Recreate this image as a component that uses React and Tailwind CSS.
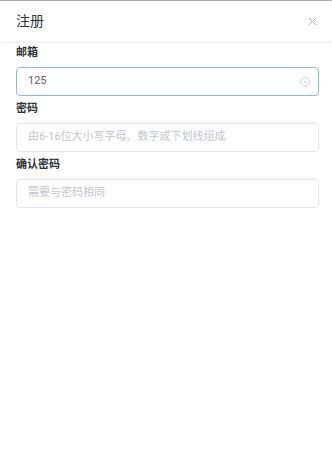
import React, { useState } from 'react';

function Field({ label, value, placeholder, focused, onClear }) {
  return (
    <div className="mb-[2px]">
      <div className="h-[22px] leading-[22px] text-[11px] font-bold text-[#303133]">{label}</div>
      <div
        className={
          focused
            ? 'mt-[3px] h-[29px] flex items-center rounded-[4px] border border-[#7fbdf7] bg-white pl-[11px] pr-[8px]'
            : 'mt-[3px] h-[29px] flex items-center rounded-[4px] border border-[#e4e7ed] bg-white pl-[11px] pr-[8px]'
        }
      >
        <input
          type="text"
          value={value}
          readOnly
          placeholder={placeholder}
          className="flex-1 min-w-0 bg-transparent text-[11px] text-[#606266] outline-none placeholder:text-[#c4c7cd]"
        />
        {value ? (
          <button onClick={onClear} className="flex h-[10px] w-[10px] items-center justify-center rounded-full border border-[#d0d3d9]">
            <svg width="4" height="4" viewBox="0 0 10 10">
              <path d="M2 2 L8 8 M8 2 L2 8" stroke="#d0d3d9" strokeWidth="2" strokeLinecap="round" />
            </svg>
          </button>
        ) : null}
      </div>
    </div>
  );
}

export default function App() {
  const [email, setEmail] = useState('125');

  return (
    <div
      className="min-h-[474px] w-full bg-white border-t border-[#b4b4b4]"
      style={{ fontFamily: 'Roboto, "Noto Sans CJK SC", sans-serif' }}
    >
      {/* Header */}
      <div className="relative z-10 h-10 flex items-center justify-between pl-4 pr-[15px] bg-white shadow-[0_2px_4px_rgba(0,0,0,0.07)]">
        <span className="text-[14px] text-[#303133]">注册</span>
        <svg width="9" height="9" viewBox="0 0 10 10">
          <path d="M1 1 L9 9 M9 1 L1 9" stroke="#a8abb2" strokeWidth="1" />
        </svg>
      </div>

      {/* Form */}
      <div className="pl-4 pr-[13px] pt-[1px]">
        <Field label="邮箱" value={email} focused onClear={() => setEmail('')} />
        <Field label="密码" value="" placeholder="由6-16位大小写字母、数字或下划线组成" />
        <Field label="确认密码" value="" placeholder="需要与密码相同" />
      </div>
    </div>
  );
}
